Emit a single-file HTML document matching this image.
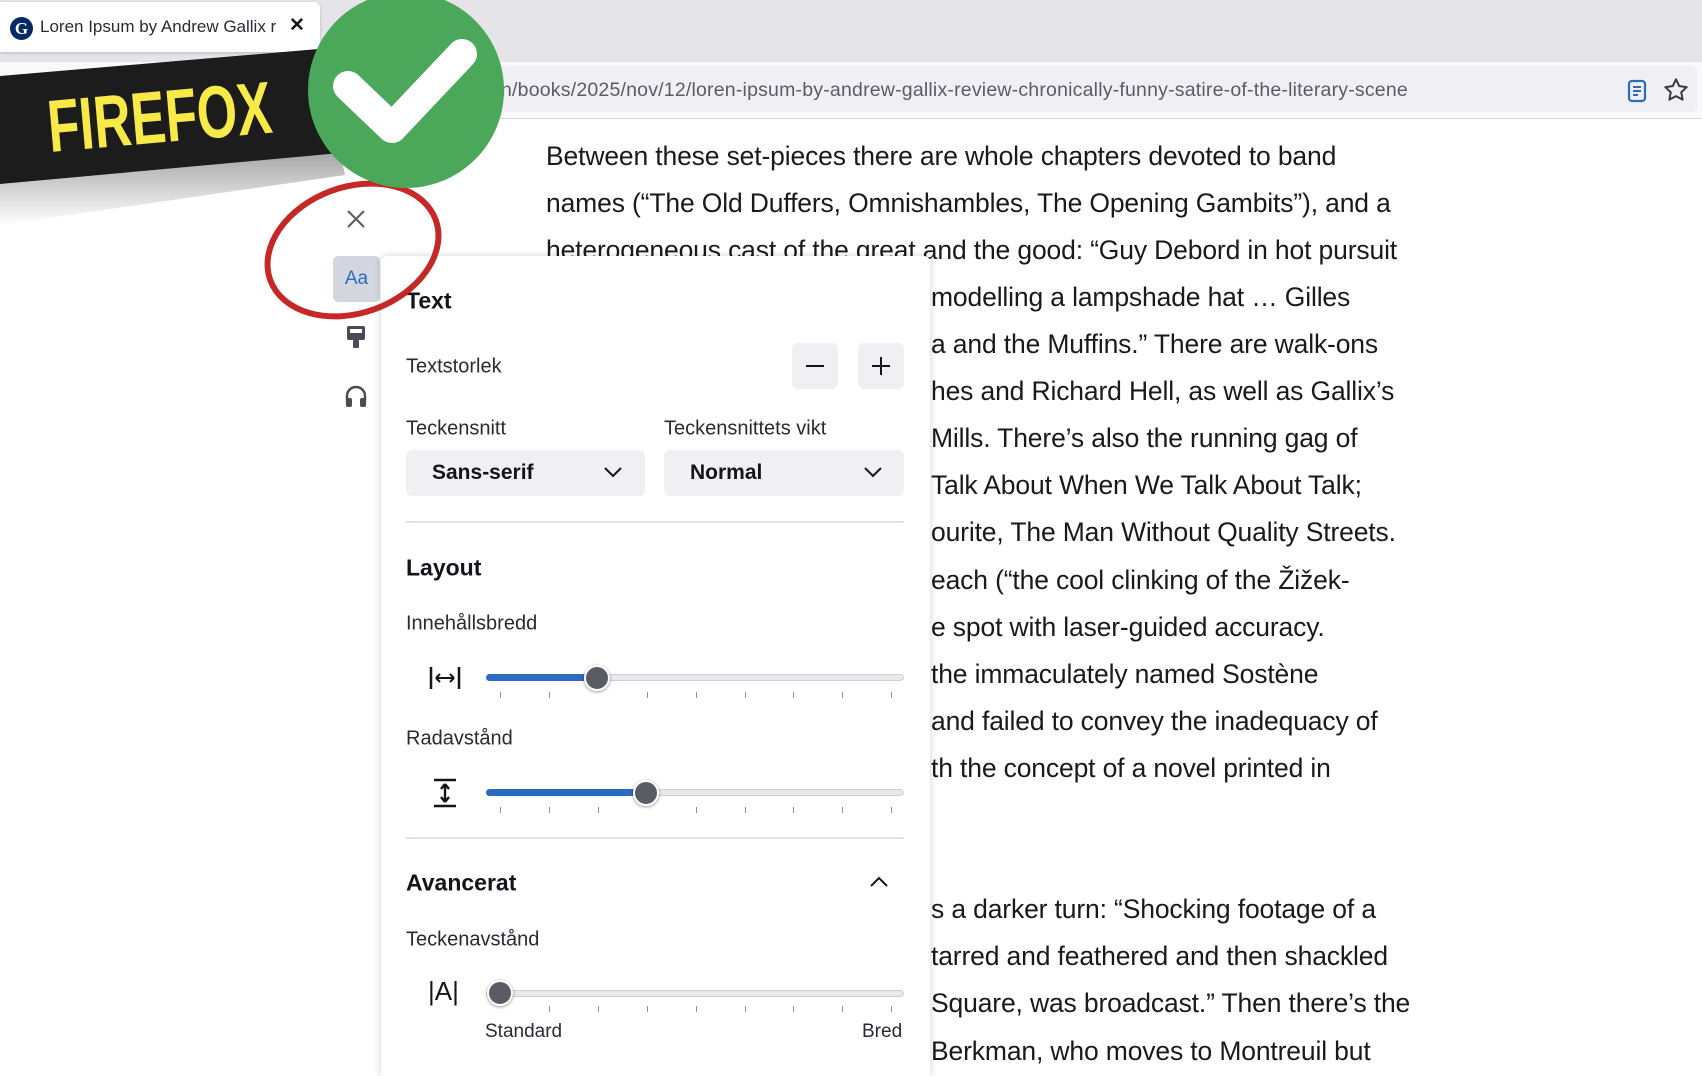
<!DOCTYPE html>
<html><head><meta charset="utf-8"><style>
*{margin:0;padding:0;box-sizing:border-box}
body{width:1702px;height:1054px;overflow:hidden;background:#fff;font-family:"Liberation Sans",sans-serif;position:relative}
.abs{position:absolute}
.art{position:absolute;font-size:26.5px;line-height:47.1px;color:#1a1a1a;letter-spacing:-0.15px;white-space:nowrap}
.panel{position:absolute;left:381px;top:256px;width:549px;height:820px;background:#fff;border-radius:6px 6px 0 0;box-shadow:0 0 8px rgba(0,0,0,.18)}
.p{position:absolute;color:#15141a;white-space:nowrap}
.lbl{font-size:20px;color:#2b2a33;transform:translateY(-50%)}
.h{font-size:23px;font-weight:bold;transform:translateY(-50%)}
.btn{position:absolute;background:#f0f0f4;border-radius:6px}
.sel{position:absolute;background:#f0f0f4;border-radius:6px;height:46px;top:450px}
.sel span{position:absolute;left:26px;top:50%;transform:translateY(-50%);font-weight:bold;font-size:21px;color:#15141a}
.track{position:absolute;left:486px;width:418px;height:7px;border-radius:4px;background:#e9e9ed;border:1px solid #cfcfd8}
.fill{position:absolute;left:486px;height:7px;border-radius:4px;background:#2d6bc0}
.thumb{position:absolute;width:26px;height:26px;border-radius:50%;background:#5b5b66;border:2px solid #fff;box-shadow:0 1px 3px rgba(0,0,0,.4)}
.tick{position:absolute;width:1px;height:6px;background:#8f8f9d}
</style></head><body>
<!-- tab bar -->
<div class="abs" style="left:0;top:0;width:1702px;height:62px;background:#e4e4e9"></div>
<div class="abs" style="left:0;top:62px;width:1702px;height:57px;background:#f9f9fb;border-bottom:1px solid #d8d8dc"></div>
<div class="abs" style="left:0;top:2px;width:320px;height:50px;background:#fff;border-radius:0 6px 6px 0;box-shadow:0 1px 3px rgba(0,0,0,.2)"></div>
<div class="abs" style="left:10px;top:17px;width:23px;height:23px;border-radius:50%;background:#052962;color:#fff;font:bold 17px 'Liberation Serif',serif;text-align:center;line-height:23px">G</div>
<div class="abs" style="left:40px;top:17px;font-size:17px;color:#2b2a33;white-space:nowrap;width:236px;overflow:hidden">Loren Ipsum by Andrew Gallix re</div>
<div class="abs" style="left:289px;top:14px;font-size:19px;font-weight:bold;color:#15141a">✕</div>
<div class="abs" style="left:330px;top:66px;width:1367px;height:46px;background:#f0f0f4;border-radius:5px"></div>
<div class="abs" style="left:501px;top:79px;font-size:19.5px;color:#5b5b66;white-space:nowrap;letter-spacing:0.2px">n/books/2025/nov/12/loren-ipsum-by-andrew-gallix-review-chronically-funny-satire-of-the-literary-scene</div>
<svg class="abs" style="left:1624px;top:78px" width="26" height="26" viewBox="0 0 26 26"><rect x="5" y="3" width="16" height="20" rx="3" fill="none" stroke="#2d6bc0" stroke-width="2.2"/><path d="M9 9h8M9 13h8M9 17h5" stroke="#2d6bc0" stroke-width="2"/></svg>
<svg class="abs" style="left:1662px;top:76px" width="28" height="28" viewBox="0 0 24 24"><path d="M12 2.8l2.8 5.9 6.4.8-4.7 4.4 1.2 6.4L12 17.2l-5.7 3.1 1.2-6.4-4.7-4.4 6.4-.8z" fill="none" stroke="#3a3944" stroke-width="1.7" stroke-linejoin="round"/></svg>

<!-- article -->
<div class="art" style="left:546px;top:133px">
Between these set-pieces there are whole chapters devoted to band<br>
names (“The Old Duffers, Omnishambles, The Opening Gambits”), and a<br>
heterogeneous cast of the great and the good: “Guy Debord in hot pursuit
</div>
<div class="art" style="left:931px;top:274px">
modelling a lampshade hat … Gilles<br>
a and the Muffins.” There are walk-ons<br>
hes and Richard Hell, as well as Gallix’s<br>
Mills. There’s also the running gag of<br>
Talk About When We Talk About Talk;<br>
ourite, The Man Without Quality Streets.<br>
each (“the cool clinking of the Žižek-<br>
e spot with laser-guided accuracy.<br>
the immaculately named Sostène<br>
and failed to convey the inadequacy of<br>
th the concept of a novel printed in<br>
<br><br>
s a darker turn: “Shocking footage of a<br>
tarred and feathered and then shackled<br>
Square, was broadcast.” Then there’s the<br>
Berkman, who moves to Montreuil but
</div>

<!-- sidebar -->
<svg class="abs" style="left:345px;top:208px" width="22" height="22" viewBox="0 0 22 22"><path d="M3 3L19 19M19 3L3 19" stroke="#5b5b66" stroke-width="2"/></svg>
<div class="abs" style="left:333px;top:256px;width:47px;height:46px;background:#d3d6df;border-radius:5px;color:#2d6bc0;font-size:19px;text-align:center;line-height:46px">Aa</div>
<svg class="abs" style="left:345px;top:324px" width="22" height="26" viewBox="0 0 22 26"><rect x="2" y="2" width="18" height="14" rx="2" fill="#4a4a55"/><rect x="5" y="5" width="12" height="4" fill="#fff"/><rect x="8" y="16" width="6" height="8" rx="1" fill="#4a4a55"/></svg>
<svg class="abs" style="left:343px;top:383px" width="26" height="26" viewBox="0 0 26 26"><path d="M4 20v-7a9 9 0 0 1 18 0v7" fill="none" stroke="#4a4a55" stroke-width="2.4"/><rect x="3" y="15" width="6" height="9" rx="2" fill="#4a4a55"/><rect x="17" y="15" width="6" height="9" rx="2" fill="#4a4a55"/></svg>

<!-- panel -->
<div class="panel"></div>
<div class="p h" style="left:406px;top:301px">Text</div>
<div class="p lbl" style="left:406px;top:367px">Textstorlek</div>
<div class="btn" style="left:792px;top:343px;width:46px;height:46px"></div>
<div class="btn" style="left:858px;top:343px;width:46px;height:46px"></div>
<div class="abs" style="left:806px;top:365px;width:18px;height:2px;background:#15141a"></div>
<div class="abs" style="left:872px;top:365px;width:18px;height:2px;background:#15141a"></div>
<div class="abs" style="left:880px;top:357px;width:2px;height:18px;background:#15141a"></div>
<div class="p lbl" style="left:406px;top:429px">Teckensnitt</div>
<div class="p lbl" style="left:664px;top:429px">Teckensnittets vikt</div>
<div class="sel" style="left:406px;width:239px"><span>Sans-serif</span></div>
<div class="sel" style="left:664px;width:240px"><span>Normal</span></div>
<svg class="abs" style="left:602px;top:465px" width="22" height="14" viewBox="0 0 22 14"><path d="M3 3l8 8 8-8" fill="none" stroke="#15141a" stroke-width="2"/></svg>
<svg class="abs" style="left:862px;top:465px" width="22" height="14" viewBox="0 0 22 14"><path d="M3 3l8 8 8-8" fill="none" stroke="#15141a" stroke-width="2"/></svg>
<div class="abs" style="left:406px;top:521px;width:498px;height:2px;background:#e0e0e6"></div>
<div class="p h" style="left:406px;top:568px">Layout</div>
<div class="p lbl" style="left:406px;top:624px">Innehållsbredd</div>
<svg class="abs" style="left:428px;top:664px" width="34" height="28" viewBox="0 0 34 28"><path d="M3 3v22M31 3v22" stroke="#15141a" stroke-width="2.5"/><path d="M8 14h18M8 14l4-4M8 14l4 4M26 14l-4-4M26 14l-4 4" stroke="#15141a" stroke-width="2" fill="none"/></svg>
<div class="track" style="top:674px"></div><div class="fill" style="top:674px;width:111px"></div>
<div class="thumb" style="left:584px;top:665px"></div>
<div class="p lbl" style="left:406px;top:739px">Radavstånd</div>
<svg class="abs" style="left:430px;top:777px" width="30" height="32" viewBox="0 0 30 32"><path d="M4 3h22M4 29h22" stroke="#15141a" stroke-width="2.5"/><path d="M15 7v18M15 7l-4 5M15 7l4 5M15 25l-4-5M15 25l4-5" stroke="#15141a" stroke-width="2.4" fill="none"/></svg>
<div class="track" style="top:789px"></div><div class="fill" style="top:789px;width:160px"></div>
<div class="thumb" style="left:633px;top:780px"></div>
<div class="abs" style="left:406px;top:837px;width:498px;height:2px;background:#e0e0e6"></div>
<div class="p h" style="left:406px;top:883px">Avancerat</div>
<svg class="abs" style="left:868px;top:875px" width="22" height="14" viewBox="0 0 22 14"><path d="M3 11l8-8 8 8" fill="none" stroke="#15141a" stroke-width="2"/></svg>
<div class="p lbl" style="left:406px;top:940px">Teckenavstånd</div>
<div class="p" style="left:428px;top:976px;font-size:26px;color:#15141a">|A|</div>
<div class="track" style="top:990px"></div>
<div class="thumb" style="left:487px;top:980px"></div>
<div class="p lbl" style="left:485px;top:1032px;font-size:19px">Standard</div>
<div class="p lbl" style="left:862px;top:1032px;font-size:19px">Bred</div>
<div id="ticks"></div>
<script>
var h='';[692,807,1006].forEach(function(y,i){for(var k=0;k<9;k++){var x=500+k*48.9;if(i==0&&k==2)continue;if(i==1&&k==3)continue;if(i==2&&k==0)continue;h+='<div class="tick" style="left:'+x+'px;top:'+y+'px"></div>';}});document.getElementById('ticks').innerHTML=h;
</script>

<!-- banner -->
<svg class="abs" style="left:0;top:0" width="520" height="340" viewBox="0 0 520 340">
<defs><linearGradient id="sh" x1="0" y1="0" x2="0" y2="1"><stop offset="0" stop-color="#000" stop-opacity=".35"/><stop offset="1" stop-color="#000" stop-opacity="0"/></linearGradient></defs>
<polygon points="0,183 340,152 345,175 0,225" fill="url(#sh)"/>
<polygon points="0,76 330,48 340,153 0,184" fill="#1c1c1c"/>
<text x="50" y="152" transform="rotate(-5 50 152) translate(50 152) scale(.7 1) translate(-50 -152)" font-family="Liberation Sans" font-weight="bold" font-size="74" fill="#f7ea48">FIREFOX</text>
<ellipse cx="353" cy="250" rx="88" ry="63" transform="rotate(-20 353 250)" fill="none" stroke="#c62828" stroke-width="6"/>
<circle cx="406" cy="90" r="98" fill="#4ba85a"/>
<path d="M348 86 L392 128 L462 54" fill="none" stroke="#fff" stroke-width="30" stroke-linecap="round" stroke-linejoin="round"/>
</svg>
</body></html>
